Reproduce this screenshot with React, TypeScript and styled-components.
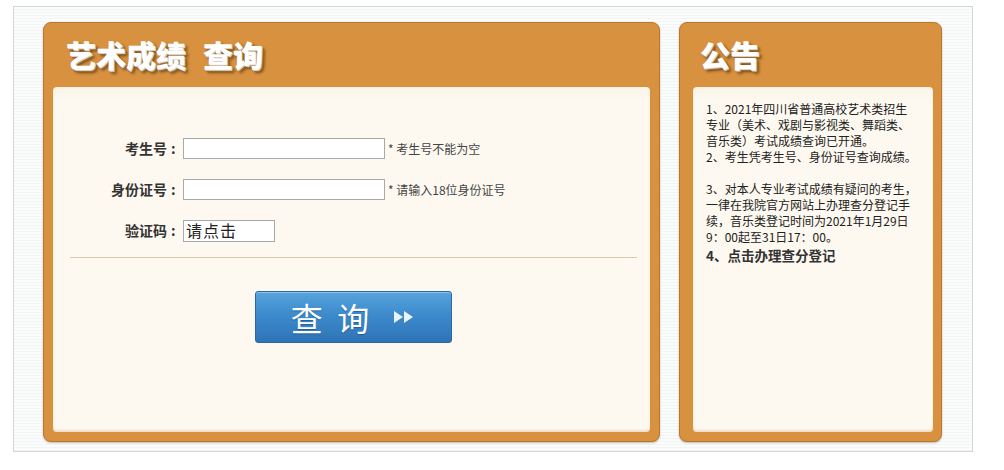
import * as React from 'react';
import styled, { createGlobalStyle } from 'styled-components';

const GlobalStyle = createGlobalStyle`
  html, body {
    margin: 0;
    padding: 0;
    background: #ffffff;
    font-family: 'Noto Sans CJK SC', 'Noto Sans', sans-serif;
  }
`;

const orange = '#d8913e';
const cream = '#fdf9f0';

const Frame = styled.div`
  margin: 6px 0 0 13px;
  width: 960px;
  height: 446px;
  box-sizing: border-box;
  border: 1px solid #d3d7d7;
  background: repeating-linear-gradient(
    to bottom,
    #fbfcfc 0px,
    #fbfcfc 2px,
    #f3f5f5 2px,
    #f3f5f5 3px
  );
  display: flex;
  gap: 19px;
  padding: 15px 0 0 29px;
`;

const Panel = styled.div<{ $width: number }>`
  width: ${({ $width }) => $width}px;
  height: 420px;
  box-sizing: border-box;
  background: ${orange};
  border: 1px solid #b9782f;
  border-radius: 8px;
  box-shadow: 0 1px 2px rgba(90, 60, 20, 0.35);
  display: flex;
  flex-direction: column;
`;

const PanelHead = styled.div<{ $left: number }>`
  height: 64px;
  display: flex;
  align-items: center;
  padding-left: ${({ $left }) => $left}px;
  padding-bottom: 3px;
  box-sizing: border-box;
`;

const Title = styled.h1`
  margin: 0;
  font-size: 30px;
  font-weight: 900;
  color: #ffffff;
  white-space: pre;
  text-shadow:
    1px 1px 0 #d9d0c0,
    2px 2px 0 #9c6a30,
    3px 3px 3px rgba(40, 20, 0, 0.6);
`;

const TitleGap = styled.span`
  display: inline-block;
  width: 17px;
`;

const Inner = styled.div<{ $left: number; $right: number }>`
  flex: 1;
  margin: 0 ${({ $right }) => $right}px 9px ${({ $left }) => $left}px;
  background: linear-gradient(to bottom, #fbf4e8 0px, ${cream} 14px);
  border-radius: 4px;
  box-shadow: inset 0 -2px 2px rgba(220, 200, 170, 0.5);
`;

const Form = styled.div`
  display: grid;
  grid-template-columns: 130px auto;
  row-gap: 20px;
  padding-top: 51px;
`;

const Label = styled.label`
  font-size: 14px;
  font-weight: bold;
  color: #333;
  text-align: right;
  line-height: 21px;
  white-space: nowrap;
`;

const Colon = styled.span`
  display: inline-block;
  width: 12px;
  text-align: left;
  margin-left: 4px;
`;

const Field = styled.div`
  display: flex;
  align-items: center;
  gap: 3px;
`;

const TextInput = styled.input`
  width: 202px;
  height: 21px;
  box-sizing: border-box;
  border: 1px solid #a9a9a9;
  background: #fff;
  padding: 0 3px;
  outline: none;
`;

const Hint = styled.span`
  font-size: 12px;
  color: #444;
  white-space: nowrap;
`;

const Captcha = styled.div`
  width: 92px;
  height: 22px;
  box-sizing: border-box;
  border: 1px solid #a9a9a9;
  background: #fff;
  font-size: 16px;
  line-height: 19px;
  color: #222;
  padding-left: 2px;
  letter-spacing: 1px;
`;

const Divider = styled.hr`
  margin: 15px 13px 0 17px;
  border: 0;
  border-top: 1px solid #d9ccae;
`;

const ButtonRow = styled.div`
  display: flex;
  justify-content: center;
  padding-top: 33px;
  padding-left: 3px;
`;

const QueryButton = styled.button`
  width: 197px;
  height: 52px;
  box-sizing: border-box;
  border: 1px solid #2b67a3;
  border-radius: 3px;
  background: linear-gradient(to bottom, #56a3dc 0%, #3d8bcc 45%, #2e74b7 100%);
  box-shadow: inset 0 1px 0 rgba(255, 255, 255, 0.35);
  display: flex;
  align-items: center;
  justify-content: center;
  gap: 24px;
  padding: 0;
  cursor: pointer;
  font-family: 'Noto Sans CJK SC', sans-serif;
  font-size: 32px;
  color: #ffffff;
  text-shadow: 0 1px 1px rgba(0, 40, 90, 0.4);
`;

const Notice = styled.div`
  padding: 14px 8px 0 13px;
  font-size: 12px;
  line-height: 16px;
  color: #222;
`;

const NoticeLine = styled.p<{ $gap?: boolean }>`
  margin: ${({ $gap }) => ($gap ? '16px' : '0')} 0 0;
  white-space: nowrap;
`;

const NoticeLink = styled.a`
  display: block;
  margin-top: 2px;
  font-size: 13.5px;
  font-weight: bold;
  color: #333;
  text-decoration: none;
  cursor: pointer;
`;

const Arrows = () => (
  <svg width="22" height="16" viewBox="0 0 22 16">
    <polygon points="1,2 10,8 1,14" fill="#e8f4fc" />
    <polygon points="11,2 20,8 11,14" fill="#e8f4fc" />
  </svg>
);

const FormLabel = ({ text, htmlFor }: { text: string; htmlFor?: string }) => (
  <Label htmlFor={htmlFor}>
    {text}
    <Colon>:</Colon>
  </Label>
);

export default function App() {
  return (
    <>
      <GlobalStyle />
      <Frame>
        <Panel $width={617}>
          <PanelHead $left={22}>
            <Title>
              艺术成绩<TitleGap />查询
            </Title>
          </PanelHead>
          <Inner $left={9} $right={9}>
            <Form>
              <FormLabel htmlFor="ksh" text="考生号" />
              <Field>
                <TextInput id="ksh" type="text" />
                <Hint>* 考生号不能为空</Hint>
              </Field>
              <FormLabel htmlFor="sfz" text="身份证号" />
              <Field>
                <TextInput id="sfz" type="text" />
                <Hint>* 请输入18位身份证号</Hint>
              </Field>
              <FormLabel text="验证码" />
              <Field>
                <Captcha>请点击</Captcha>
              </Field>
            </Form>
            <Divider />
            <ButtonRow>
              <QueryButton type="button">
                <span>查&nbsp;&nbsp;询</span>
                <Arrows />
              </QueryButton>
            </ButtonRow>
          </Inner>
        </Panel>
        <Panel $width={263}>
          <PanelHead $left={20}>
            <Title>公告</Title>
          </PanelHead>
          <Inner $left={13} $right={8}>
            <Notice>
              <NoticeLine>1、2021年四川省普通高校艺术类招生</NoticeLine>
              <NoticeLine>专业（美术、戏剧与影视类、舞蹈类、</NoticeLine>
              <NoticeLine>音乐类）考试成绩查询已开通。</NoticeLine>
              <NoticeLine>2、考生凭考生号、身份证号查询成绩。</NoticeLine>
              <NoticeLine $gap>3、对本人专业考试成绩有疑问的考生，</NoticeLine>
              <NoticeLine>一律在我院官方网站上办理查分登记手</NoticeLine>
              <NoticeLine>续，音乐类登记时间为2021年1月29日</NoticeLine>
              <NoticeLine>9：00起至31日17：00。</NoticeLine>
              <NoticeLink>4、点击办理查分登记</NoticeLink>
            </Notice>
          </Inner>
        </Panel>
      </Frame>
    </>
  );
}
